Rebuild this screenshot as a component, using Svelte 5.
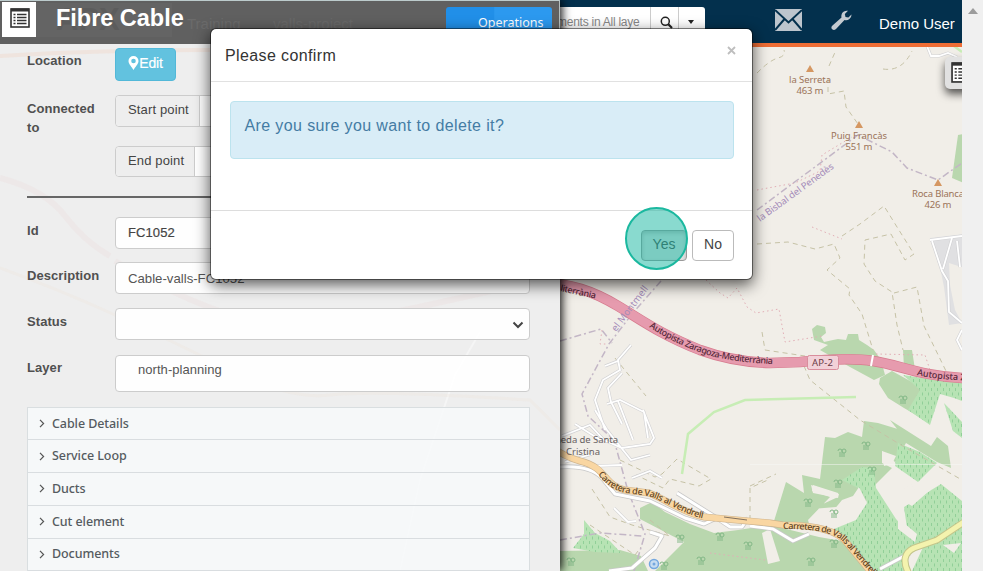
<script>
  const sections = ['Cable Details', 'Service Loop', 'Ducts', 'Cut element', 'Documents'];
  const peaks = [
    { x: 810, y: 69, name: 'la Serreta', alt: '463 m', w: 42 },
    { x: 859, y: 125, name: 'Puig Francàs', alt: '551 m', w: 56 },
    { x: 938, y: 183, name: 'Roca Blanca', alt: '426 m', w: 52 }
  ];
  const trees = [[842, 454], [866, 447], [838, 485], [808, 504], [834, 515], [811, 563], [834, 545], [903, 401], [720, 538], [748, 547], [680, 540], [571, 563], [664, 567], [701, 562], [872, 472]];
</script>

{#snippet listIcon(size)}
  <svg width={size} height={size} viewBox="0 0 20 20">
    <rect x="1" y="1" width="18" height="18" fill="#fff" stroke="#333" stroke-width="1.600" />
    <path d="M1 2H19" stroke="#333" stroke-width="3" />
    <path d="M3.500 6.500H5.500M3.500 9.500H5.500M3.500 12.500H5.500M3.500 15.500H5.500M7 6.500H16.500M7 9.500H16.500M7 12.500H16.500M7 15.500H16.500" stroke="#333" stroke-width="1.400" />
  </svg>
{/snippet}

<div class="window">
  <div class="main">
    <svg class="map" width="962" height="571" viewBox="0 0 962 571">
      <defs>
        <pattern id="orchard" width="6" height="9" patternUnits="userSpaceOnUse">
          <rect width="6" height="9" fill="#b7e3b4" />
          <path d="M1.5 1v3M4.5 5.5v3" stroke="#91cf98" stroke-width="1" />
        </pattern>
        <path id="motorway" d="M540 283C570 283 593 291 618 306S660 334 700 350Q733 362 770 363L800 362Q850 357 873 361C900 365 920 376 962 378L985 379" />
        <path id="valls" d="M550 446Q565 457 580 461C608 468 603 485 625 490L649 493C665 499 686 514 704 517L770 523L783 525C810 525 837 529 847 543L874 576" />
        <path id="motorway-label" d="M649 327Q675 344 705 354T800 365" />
        <path id="motorway-east" d="M917 375Q938 380 978 381" />
        <path id="valls-label" d="M598 474C606 485 613 490 627 493L648 496C665 501 684 515 706 519" />
        <path id="valls-east" d="M783 529C810 529 836 531 845 544L874 577" />
      </defs>
      <rect width="962" height="571" fill="#f1eee8" />

      <g fill="#b9d7ae">
        <path d="M812 329L817 325L825 327L826 333L821 337L824 342L833 340L838 339L846 340L848 334L858 334L859 340L867 345L874 350L881 360L885 375L874 380L850 367L820 350L828 345L814 340Z" />
        <path d="M903 350H912L916 376L904 367Z" />
        <path d="M880 378L892 371L910 381L932 388L930 424L916 415L904 408L888 398L879 384Z" />
        <path d="M774 521L786 482L804 493L802 475L820 479L825 437L835 438L848 432L862 437L864 421L878 423L901 430L909 444L890 420L931 446L937 437L948 446L951 468L937 462L906 443L895 462L882 451V463L892 468L875 485L851 483L864 488L867 500L858 519L834 512L848 506L812 509L838 497V493L813 485L812 491L830 497L808 520L810 527Z" />
        <path d="M640 508L652 502L665 512L690 524L714 533L738 530L770 525L819 537L842 541L866 571H655L684 542L640 519Z" />
        <path d="M560 551L620 550L641 556L648 571H560Z" />
        <path d="M958 135L964 134V183L952 178Z" />
      </g>
      <g fill="url(#orchard)">
        <path d="M903 375L935 380L962 381V401L954 398L940 394L930 425L908 410L920 390Z" />
        <path d="M842 480L862 467L874 468L876 488L896 519L906 530L924 528L937 542L909 549L904 571H875L848 543L834 529L856 520L867 501L860 489Z" />
        <path d="M898 443L920 452L937 463L918 482L895 466Z" />
        <path d="M904 507L941 484L962 501V571H912L925 543L907 528Z" />
        <path d="M944 403L962 422V438L953 431Z" />
        <path d="M573 548L584 534L584 520L595 533L610 541L621 553L595 552Z" />
      </g>
      <g fill="#f1eee8">
        <path d="M762 533L770 529L780 561L768 564Z" />
        <path d="M882 451L896 456L892 464L884 466Z" />
        <path d="M833 511L842 500L853 496L859 487L867 503L856 520L840 516Z" />
        <path d="M811 485L839 494L838 498L813 493Z" />
        <path d="M902 490L911 484L917 493L940 473L945 477L912 506L905 502Z" />
        <path d="M898 518L917 534L915 542L898 529Z" />
        <path d="M943 545L961 543L954 553Z" />
      </g>

      <g fill="none" stroke="#c6c2a6" stroke-width="1" stroke-dasharray="5 4">
        <path d="M757 73Q770 60 778 58T784 50M829 66L836 50M828 78L828 94L844 91L846 107L858 124M883 69Q902 72 912 51" />
        <path d="M757 244L788 242L815 249L834 244L840 258L827 270L850 289L849 295L862 314L873 350M842 236L860 224L884 206L897 227L914 254L905 260L891 234L865 240L864 264L875 281L892 292L897 325L903 350" />
        <path d="M894 293L917 287L924 326L946 371M804 366L810 380L860 420L901 445L962 480M762 332L765 350L805 356" />
        <path d="M615 358L628 374L646 396M620 460L655 477L662 474L677 459L711 479L699 486L670 479L663 488L636 475M750 486L776 474M750 520V488L770 479" />
        <path d="M592 489L610 517L632 525L670 536L650 520M590 525L635 555L641 547" />
      </g>
      <g fill="none" stroke="#e2aeb6" stroke-width="1" stroke-dasharray="1.5 3">
        <path d="M706 280L720 293L728 298L737 288L747 307L756 313L779 309L785 342L822 336M757 190L795 183L820 171L822 155L852 137M812 227L842 239M602 330L600 344L608 344M710 553L765 560M876 354L925 355L930 370" />
      </g>
      <g fill="none" stroke="#c3b6c6" stroke-width="1.500" stroke-dasharray="7 3 2 3">
        <path d="M661 281L632 314L609 344L582 394L588 416L614 440L628 491L645 534L634 571M757 210L858 135L892 152L907 168L938 180L962 163" />
        <path d="M560 341L601 329L612 343M560 540L600 533L643 536" />
      </g>

      <path d="M930 238L964 234V268L949 263L950 285L955 310L962 323L949 325L944 287L940 267Z" fill="#e0e0e2" />
      <g fill="none">
        <path id="lanes" d="M631 345L618 360L620 370L603 380L595 400L605 430M605 366L618 361M622 373L608 388L611 402L622 424M607 404L620 400L644 412L648 438M618 401L633 440M562 436L590 425L604 440L622 448L650 444L654 438L643 410M595 410L607 430L631 460L650 455M560 466L595 466L622 465M575 424L602 441M565 462L592 454M632 478L650 471L662 478M614 508L628 522L636 521M930 240L962 236M932 241L942 271L948 281L949 312L962 323M952 238L943 269M957 241L960 267M927 46L931 56L939 56L948 53L957 57M962 330L957 340L962 350" stroke="#d1d1d3" stroke-width="3" />
        <path d="M631 345L618 360L620 370L603 380L595 400L605 430M605 366L618 361M622 373L608 388L611 402L622 424M607 404L620 400L644 412L648 438M618 401L633 440M562 436L590 425L604 440L622 448L650 444L654 438L643 410M595 410L607 430L631 460L650 455M560 466L595 466L622 465M575 424L602 441M565 462L592 454M632 478L650 471L662 478M614 508L628 522L636 521M930 240L962 236M932 241L942 271L948 281L949 312L962 323M952 238L943 269M957 241L960 267M927 46L931 56L939 56L948 53L957 57M962 330L957 340L962 350" stroke="#fff" stroke-width="1.800" />
      </g>
      <path d="M682 474L688 434L714 412L745 400L856 397M954 46L962 52" fill="none" stroke="#c7edb5" stroke-width="2.500" />

      <g fill="none" stroke-linejoin="round">
        <path d="M560 467Q590 465 602 478L615 494L650 501L685 518L704 524L717 518L677 493M718 519L730 527L742 527L748 518M750 526L773 529L793 541L809 534M880 569L910 553M609 571L632 568L655 548L662 536L650 532" stroke="#c8c8c8" stroke-width="4.500" />
        <path d="M560 467Q590 465 602 478L615 494L650 501L685 518L704 524L717 518L677 493M718 519L730 527L742 527L748 518M750 526L773 529L793 541L809 534M880 569L910 553M609 571L632 568L655 548L662 536L650 532" stroke="#fff" stroke-width="3" />
        <path d="M967 520L937 540L914 548Q899 555 909 574" stroke="#c4c58b" stroke-width="7" />
        <path d="M967 520L937 540L914 548Q899 555 909 574" stroke="#f4f3ae" stroke-width="5" />
        <use href="#valls" stroke="#cfb48e" stroke-width="7" />
        <use href="#valls" stroke="#f9d6a2" stroke-width="5.800" />
        <use href="#motorway" stroke="#d77b8e" stroke-width="10.500" />
        <use href="#motorway" stroke="#e69bae" stroke-width="9.300" />
        <path d="M873 355L871 366" stroke="#fff" stroke-width="2" />
        <path d="M724 517L747 520" stroke="#82715f" />
      </g>
      <path d="M750 464.500H962" stroke="#f7f7f5" stroke-opacity=".5" />

      <g fill="none" stroke="#83b887" stroke-width="1">
        {#each trees as [x, y]}
          <path d="M{x - 4} {y - 3}a2 2 0 1 1 4 0v6m-2-5v5m2-6a2 2 0 1 1 4 0a2 2 0 1 1-4 0m2 2v4" />
        {/each}
      </g>
      <circle cx="654" cy="564" r="4.500" fill="#c7dcf0" stroke="#73a7df" stroke-width="1.500" /><circle cx="654" cy="564" r="1.500" fill="#73a7df" />

      <rect x="807.500" y="355.500" width="31" height="14" rx="2" fill="#f2d1d8" stroke="#d98d9c" />
      <g class="map-text">
        <text x="812" y="366" font-size="9.500" textLength="21" fill="#6b3c46">AP-2</text>
        <g class="road" fill="#55283a">
          <text font-size="9"><textPath href="#motorway-label" textLength="131">Autopista Zaragoza-Mediterrània</textPath></text>
          <text font-size="9"><textPath href="#motorway-east">Autopista Z</textPath></text>
          <text x="560" y="291" font-size="9" textLength="36" transform="rotate(12 560 291)">literrània</text>
        </g>
        <g class="road" fill="#62451f">
          <text font-size="9"><textPath href="#valls-label" textLength="116">Carretera de Valls al Vendrell</textPath></text>
          <text font-size="9"><textPath href="#valls-east" textLength="108">Carretera de Valls al Vendrell</textPath></text>
        </g>
        <g fill="#a48bb9">
          <text font-size="9.500" textLength="92" transform="translate(760 222) rotate(-36)">la Bisbal del Penedès</text>
          <text font-size="9.500" textLength="54" transform="translate(616 332) rotate(-53)">el Montmell</text>
        </g>
        <g fill="#676061" font-size="9.500">
          <text x="555" y="443" textLength="63">neda de Santa</text>
          <text x="566" y="455" textLength="34">Cristina</text>
        </g>
        {#each peaks as p}
          <path d="M{p.x - 4} {p.y + 3}L{p.x} {p.y - 4}L{p.x + 4} {p.y + 3}Z" fill="#d59762" />
          <g fill="#9b7359" font-size="9.500" text-anchor="middle">
            <text x={p.x} y={p.y + 14} textLength={p.w}>{p.name}</text>
            <text x={p.x} y={p.y + 25} textLength="27">{p.alt}</text>
          </g>
        {/each}
      </g>
    </svg>

    <header class="navbar">
      <div class="search"><span class="term">ments in All laye</span><span class="go">
        <svg width="13" height="13" viewBox="0 0 13 13" fill="none" stroke="#222"><circle cx="5.300" cy="5.300" r="4" stroke-width="1.500" /><path d="M8.300 8.300L12 12" stroke-width="2.200" /></svg>
      </span><span class="caret"><i></i></span></div>
      <svg class="mail" width="27" height="22" viewBox="0 0 27 22"><rect width="27" height="22" fill="#bdc5cd" /><path d="M0 1L13.500 13.500L27 1M0 21L9.500 10M27 21L17.500 10" fill="none" stroke="#03304d" stroke-width="2" /></svg>
      <svg class="wrench" width="22" height="21" viewBox="0 0 22 21"><path d="M20.500 4.500A5.500 5.500 0 0 1 13.500 10L5 19Q3 21 1.200 19.300T1.500 15.500L10.500 7.500A5.500 5.500 0 0 1 17 .8L13.800 4L14.500 7L17.400 7.600Z" fill="#c3cad0" /></svg>
      <span class="user">Demo User</span>
    </header>
    <div class="layers">{@render listIcon(21)}</div>

    <aside class="panel">
      <div class="panel-head">
        <span class="ghost apx">APX</span><span class="ghost training">Training</span><span class="ghost project">valls-project</span>
        <div class="tile">{@render listIcon(20)}</div>
        <h1>Fibre Cable</h1>
        <div class="operations"><span>Operations</span></div>
      </div>
      <div class="form">
        <svg class="shine" width="560" height="527" viewBox="0 44 560 527" fill="none">
          <path d="M0 98L210 98" stroke="#f6d8cc" stroke-opacity=".0" />
          <path d="M0 56Q100 50 210 50" stroke="#f3cdbb" stroke-opacity=".3" stroke-width="4" />
          <path d="M0 178Q45 190 65 216T110 256M115 261Q250 340 330 325T530 282" stroke="#e8b9bc" stroke-opacity=".1" stroke-width="6" />
          <path d="M480 332L455 375L420 480L400 571" stroke="#fff" stroke-width="2" stroke-opacity=".4" />
          <path d="M0 268Q60 290 115 315T230 370T330 395T530 400L560 430" stroke="#eedccc" stroke-opacity=".18" stroke-width="3" />
        </svg>
        <div class="row location"><b>Location</b><button class="edit"><svg width="11" height="14" viewBox="0 0 11 14"><path fill="#fff" fill-rule="evenodd" d="M5.500 0A5 5 0 0 0 .5 5C.5 8 4 11 5.500 14C7 11 10.500 8 10.500 5A5 5 0 0 0 5.500 0ZM5.500 2.700A2.300 2.300 0 1 1 5.500 7.300A2.300 2.300 0 1 1 5.500 2.700Z" /></svg><span>Edit</span></button></div>
        <div class="row start"><b>Connected<br />to</b><div class="group"><span class="addon">Start point</span></div></div>
        <div class="row end"><b></b><div class="group"><span class="addon">End point</span></div></div>
        <hr />
        <div class="row"><b>Id</b><div class="input dark">FC1052</div></div>
        <div class="row desc"><b>Description</b><div class="input">Cable-valls-FC1052</div></div>
        <div class="row status"><b>Status</b><div class="input select"><svg width="12" height="8" viewBox="0 0 12 8" fill="none"><path d="M1.500 1.500L6 6L10.500 1.500" stroke="#444" stroke-width="2" /></svg></div></div>
        <div class="row layer"><b>Layer</b><div class="input layer-name">north-planning</div></div>
        <div class="accordion">
          {#each sections as name}
            <div class="section"><svg width="6" height="9" viewBox="0 0 6 9" fill="none"><path d="M1 .8L4.600 4.500L1 8.200" stroke="#555" stroke-width="1.200" /></svg><span>{name}</span></div>
          {/each}
        </div>
      </div>
    </aside>

    <div class="modal">
      <div class="modal-head"><span>Please confirm</span><svg width="9" height="9" viewBox="0 0 9 9"><path d="M1 1L8 8M8 1L1 8" stroke="#bebebe" stroke-width="1.800" /></svg></div>
      <div class="modal-body"><div class="alert">Are you sure you want to delete it?</div></div>
      <div class="modal-foot"><button class="yes">Yes</button><button>No</button></div>
      <div class="pointer"></div>
    </div>
  </div>
  <div class="scrollbar"><i></i></div>
</div>

<style>
  .window { display: flex; width: 983px; height: 571px; overflow: hidden; font-family: "Liberation Sans", Arial, sans-serif; color: #444; }
  .window * { box-sizing: border-box; }
  svg { display: block; flex: none; }
  .main { position: relative; width: 962px; height: 571px; overflow: hidden; }
  .map { position: absolute; top: 0; left: 0; }
  .map-text { font-family: "Noto Sans", sans-serif; }
  .road { font-weight: 500; }
  .scrollbar { width: 21px; background: #f0f0f0; display: flex; justify-content: center; padding-top: 8px; }
  .scrollbar i { height: 0; border: 5px solid transparent; border-top: 0; border-bottom: 6px solid #9c9c9c; }

  .navbar { position: relative; display: flex; height: 47px; background: #03304d; border-bottom: 4px solid #ee6d35; padding-left: 548px; }
  .search { display: flex; width: 157px; height: 28px; margin-top: 7px; background: #fff; border-radius: 0 3px 3px 0; color: #888; font-size: 12px; line-height: 30px; flex: none; }
  .term { width: 102px; padding-left: 9px; white-space: nowrap; letter-spacing: -.25px; }
  .go { width: 29px; border-left: 1px solid #ccc; border-right: 1px solid #ccc; padding: 9px 0 0 9px; }
  .caret { display: flex; padding: 13px 0 0 9px; }
  .caret i { width: 0; height: 0; border: 3.500px solid transparent; border-top: 4px solid #222; }
  .mail { margin: 9px 0 0 70px; }
  .wrench { margin: 10px 0 0 29px; }
  .user { margin: 15px 0 0 26px; color: #fff; font-size: 15px; line-height: 18px; white-space: nowrap; }
  .layers { position: absolute; left: 945px; top: 57px; width: 32px; height: 32px; padding: 5px 6px; background: #e1e1e1; border-radius: 5px; box-shadow: 0 5px 9px rgba(0,0,0,.65); }

  .panel { position: absolute; left: 0; top: 0; width: 560px; height: 571px; background: #eee; box-shadow: 2px 0 9px rgba(0,0,0,.95); }
  .panel-head { position: relative; display: flex; height: 44px; background: #606060; border-top: 1px solid #bccbcc; border-right: 1px solid #b5bebe; padding-left: 2px; }
  .tile { z-index: 1; width: 34px; height: 35px; margin-top: 1px; background: #fff; padding: 6px 0 0 8px; }
  h1 { z-index: 1; margin: 2px 0 0 20px; width: 390px; color: #fff; font-size: 23.500px; line-height: 30px; letter-spacing: -.02px; white-space: nowrap; }
  .operations { width: 106px; height: 36px; margin-top: 6px; border-radius: 3px; background: linear-gradient(90deg, #218fe8 45%, #2c99ef 46%); color: #fff; font: 12.500px/32px "Noto Sans", sans-serif; padding-left: 32px; }
  .ghost { position: absolute; color: #6b6b6b; font-size: 15px; top: 14px; line-height: 18px; }
  .apx { left: 36px; top: 2px; width: 136px; height: 34px; padding-left: 20px; background: #646464; color: #5c5c5c; font-size: 31px; line-height: 34px; font-weight: bold; }
  .training { left: 187px; }
  .project { left: 273px; color: #686868; }

  .form { position: relative; padding: 4px 30px 0 27px; height: 527px; overflow: hidden; }
  .shine { position: absolute; left: 0; top: 0; }
  .row { position: relative; display: flex; height: 32px; margin-bottom: 13px; font-size: 13px; }
  .row b { width: 88px; font-size: 13px; line-height: 19px; margin-top: 4px; flex: none; white-space: nowrap; color: #505050; letter-spacing: .07px; }
  .location { height: 33px; margin-bottom: 14px; }
  .location b { margin-top: 3px; }
  button { font-family: inherit; }
  .edit { display: flex; align-items: center; justify-content: center; gap: 0; width: 61px; height: 33px; padding: 0 0 4px; border: 1px solid #52b8d8; border-radius: 4px; background: #62c2df; color: #fff; font-size: 14px; letter-spacing: -.2px; -webkit-text-stroke: .2px #fff; }
  .start { margin-bottom: 19px; }
  .end { height: 31px; margin-bottom: 19px; }
  .group { flex: 1; display: flex; border: 1px solid #ccc; border-radius: 4px; background: #fff; }
  .addon { padding: 0 10px 0 12px; line-height: 28px; background: #eee; border-right: 1px solid #ccc; border-radius: 4px 0 0 4px; white-space: nowrap; letter-spacing: .14px; }
  hr { position: relative; margin: 0 0 19px; height: 2px; border: 0; background: #666; }
  .input { flex: 1; height: 32px; border: 1px solid #ccc; border-radius: 4px; background: rgba(255,255,255,.92); padding-left: 12px; line-height: 30px; color: #555; letter-spacing: -.1px; }
  .dark { color: #444; letter-spacing: .1px; -webkit-text-stroke: .2px #444; }
  .desc, .status { margin-bottom: 14px; }
  .row.status { margin-bottom: 15px; }
  .desc .input { font-size: 13.200px; line-height: 32px; letter-spacing: 0; }
  .select { display: flex; justify-content: flex-end; padding: 12px 5px 0; }
  .layer { height: 37px; margin-bottom: 15px; }
  .row.layer b { margin-top: 3px; }
  .input.layer-name { height: 37px; padding-left: 22px; line-height: 27px; letter-spacing: .05px; }
  .accordion { position: relative; border: 1px solid #d9dee0; background: rgba(246,248,250,.92); }
  .section { display: flex; align-items: center; gap: 7px; height: 32.800px; padding-left: 11px; border-bottom: 1px solid #d9dde0; font: 500 12.500px/20px "Noto Sans", sans-serif; color: #555b60; letter-spacing: -.08px; }
  .section:first-child { height: 32.200px; }

  .modal { position: absolute; left: 210px; top: 28px; width: 543px; height: 252px; background: #fff; background-clip: padding-box; border: 1px solid rgba(0,0,0,.45); border-radius: 6px; box-shadow: 0 5px 15px rgba(0,0,0,.65); }
  .modal-head { display: flex; justify-content: space-between; height: 53px; border-bottom: 1px solid #e1e1e1; padding: 17px 16px 0 14px; font-size: 16px; line-height: 20px; color: #333; letter-spacing: .38px; }
  .modal-body { height: 129px; padding: 19px 18px 0 19px; border-bottom: 1px solid #ddd; }
  .alert { height: 58px; border: 1px solid #bce3ee; border-radius: 4px; background: #d9edf7; color: #447ca4; font-size: 16px; line-height: 48px; padding-left: 13.500px; letter-spacing: .38px; }
  .modal-foot { display: flex; justify-content: flex-end; gap: 5px; padding: 19px 18px 0; }
  .modal-foot button { width: 42px; height: 31px; padding: 0 0 4px; border: 1px solid #bbb; border-radius: 4px; background: #fff; color: #444; font-size: 14px; }
  .modal-foot .yes { width: 46px; background: #e2e2e2; box-shadow: inset 0 2px 4px rgba(0,0,0,.2); border-color: #999; }
  .pointer { position: absolute; left: 414px; top: 178px; width: 63px; height: 63px; border: 2px solid #1bb89f; border-radius: 50%; background: rgba(28,184,163,.52); }
</style>
